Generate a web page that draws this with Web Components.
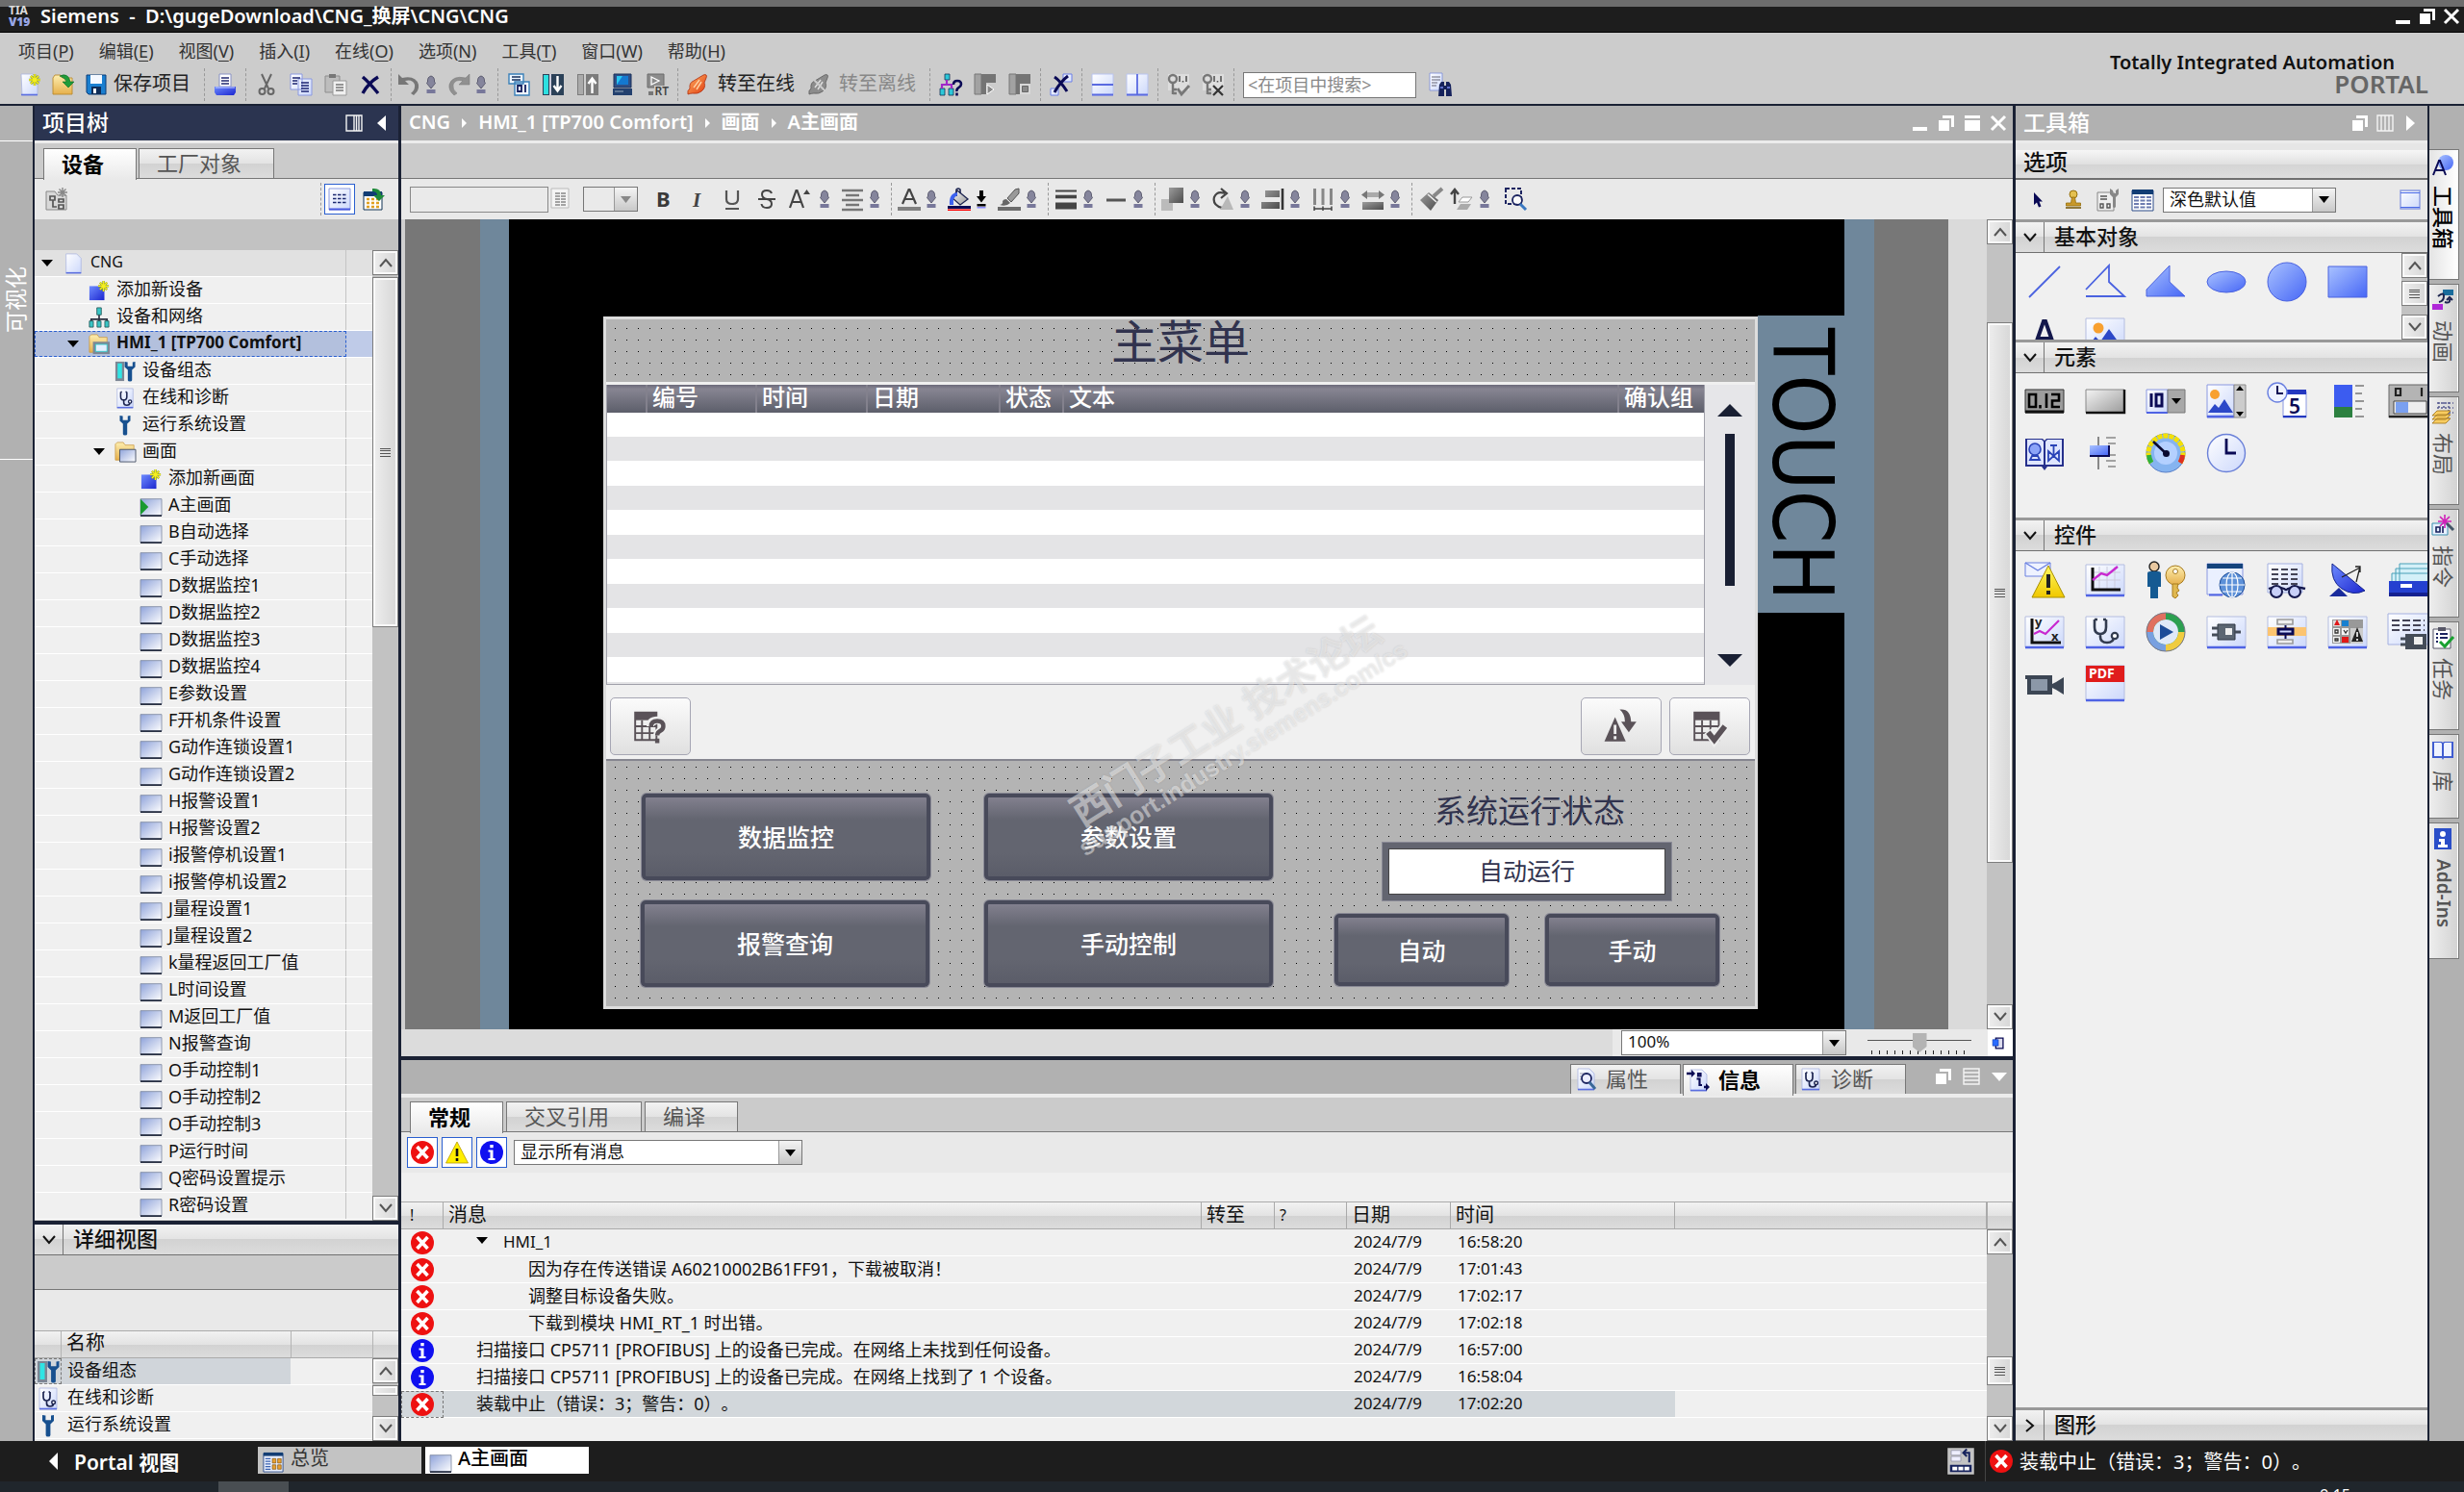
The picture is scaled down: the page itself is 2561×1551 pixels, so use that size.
<!DOCTYPE html>
<html lang="zh-CN">
<head>
<meta charset="utf-8">
<title>Siemens - CNG</title>
<style>
html,body{margin:0;height:100%;background:#1d1d1d}
body{font-family:"Noto Sans","Noto Sans CJK SC",sans-serif;font-size:18px;color:#111;overflow:hidden;text-spacing-trim:space-all}
</style>
</head>
<body>
<tia-portal></tia-portal>
<script>
const BASE = `
*{box-sizing:border-box}
:host{display:block}
button,select,input{font:inherit;color:inherit;border:0;margin:0;padding:0;background:none;border-radius:0;appearance:none}
a{color:inherit;text-decoration:none}
.row{display:flex;align-items:center}
.grow{flex:1;min-width:0}
`;
const define = (name, css, html) => customElements.define(name, class extends HTMLElement {
  connectedCallback() {
    if (this.shadowRoot) return;
    const root = this.attachShadow({mode: 'open'});
    root.innerHTML = `<style>${BASE}${css}</style>` + (typeof html === 'function' ? html(this) : html);
  }
});

/* ---------- icons ---------- */
const lg = (id, a, b, dir = 'x2="1" y2="1"') => `<linearGradient id="${id}" x1="0" y1="0" ${dir}><stop stop-color="${a}"/><stop offset="1" stop-color="${b}"/></linearGradient>`;
const V = 'x2="0" y2="1"';
const DEFS = '<defs>' + lg('blu','#a9c2ff','#4767f6') + lg('pap','#ffffff','#ccd8fb') + lg('scr','#8fa3da','#ffffff') +
  lg('dep','#6d8bff','#1c26cf') + lg('fol','#fdeeb0','#e6b04c',V) + lg('gry','#f4f4f4','#9a9a9a') + lg('drk','#9c9c9c','#4c4c4c') +
  lg('org','#ffb060','#e03a10') + lg('yel','#fff860','#f0c800',V) + '</defs>';
const star = (x, y, c = '#f4ee20') => `<g stroke="#8a9a20" stroke-width="2.6"><path d="M${x} ${y-6}v12M${x-6} ${y}h12M${x-4} ${y-4}l8 8M${x+4} ${y-4}l-8 8"/></g><g stroke="${c}" stroke-width="1.5"><path d="M${x} ${y-6}v12M${x-6} ${y}h12M${x-4} ${y-4}l8 8M${x+4} ${y-4}l-8 8"/></g>`;
const page = '<path d="M4 1h12l5 5v17H4z" fill="url(#pap)" stroke="#a9b4e0" stroke-width=".8"/><path d="M4 22.5h17" stroke="#5b6ee0" stroke-width="1.6"/>';
const wrench = (x, c = '#17508f') => `<path d="M${x-6} 1v6l3.6 3.4V22q0 1.5 2.4 1.5T${x+2.4} 22V10.400L${x+6} 7V1l-3 .6v4.600h-5.600V1.600z" fill="${c}"/>`;
const steth = '<path d="M7 5v5q0 4 3.500 4T14 10V5M7 5h1.500M14 5h-1.500M10.500 14v3q0 3 3.500 3t3.500-3" fill="none" stroke="#1c2450" stroke-width="1.700"/><circle cx="17.600" cy="15.800" r="1.800" fill="#fff" stroke="#1c2450" stroke-width="1.400"/>';
const plug = (a, b, c) => `<path d="M2 22q-1-4 2-6-1-6 4-8l10-6q2-1 3 0t0 3l-2 5q2 5-3 9-4 3-9 2-2 0-5 1z" fill="${a}" stroke="${b}" stroke-width=".8"/><path d="M14 7l-6 8M16 9l-5 8" stroke="${c}" stroke-width="1.500"/>`;
const IC = {
  new: page.replace(/M4/g,'M3') + star(17,7),
  open: '<path d="M1 5l2-3h6l2 3h10v17H1z" fill="url(#fol)" stroke="#b98a30" stroke-width=".9"/><path d="M8 3q9-4 11 6h4l-6 6-6-6h4q-1-4-7-6z" fill="#1f9c3a" stroke="#0c6a20" stroke-width=".6"/>',
  save: '<path d="M2 2h20v20H4l-2-2z" fill="#1a7fd0" stroke="#0b3c78"/><path d="M6 2h12v9H6z" fill="#f4f8ff"/><path d="M7 14h10v8H7z" fill="#0d2c58"/><path d="M9 16h3v5H9z" fill="#fff"/>',
  print: '<path d="M6 1h12v13H6z" fill="#fff" stroke="#8891c4"/><path d="M8 5h8M8 8h8M8 11h8" stroke="#222a70" stroke-width="1.400"/><path d="M1 14h22v6l-2 3H3l-2-3z" fill="url(#dep)"/><path d="M2 15h20" stroke="#c8d2ff"/>',
  cut: '<g fill="none" stroke="#666" stroke-width="2"><path d="M7 1l7 15M17 1l-7 15"/><circle cx="7.500" cy="19" r="3"/><circle cx="16.500" cy="19" r="3"/></g>',
  copy: '<path d="M1 1h12v16H1zM9 6h14v17H9z" fill="url(#pap)" stroke="#8a98e0"/><path d="M3 5h8M3 8h5M3 11h5M12 10h8M12 13h8M12 16h8M12 19h8" stroke="#1c2470" stroke-width="1.400"/>',
  paste: '<path d="M1 3h15v17H1z" fill="#bdbdbd" stroke="#8d8d8d"/><path d="M5 1h7v4H5z" fill="#777"/><path d="M9 8h14v15H9z" fill="#f0f0f0" stroke="#999"/><path d="M12 12h8M12 15h8M12 18h8" stroke="#777" stroke-width="1.400"/>',
  del: '<path d="M4 4q6 5 16 17M20 4Q10 10 4 21" stroke="#0a0a55" stroke-width="3.400" fill="none"/>',
  undo: '<path d="M1 1v11h11l-4-4q8-2 10 4 1 5-4 9l3 2q6-5 5-11Q19 2 5 5z" fill="#777"/>',
  redo: '<path d="M23 1v11H12l4-4q-8-2-10 4-1 5 4 9l-3 2q-6-5-5-11Q5 2 19 5z" fill="#909090" stroke="#777" stroke-width=".5"/>',
  compile: '<path d="M2 1h15v10H2zM8 9h15v14H8z" fill="#eef6ff" stroke="#3a80b8" stroke-width="1.400"/><path d="M5 4h9M5 7h9" stroke="#16305c" stroke-width="1.600"/><path d="M11 13h4v6h-4zM19 12v8" fill="none" stroke="#16205c" stroke-width="1.800"/>',
  dload: '<path d="M1 1h22v22H1z" fill="#2b4158"/><path d="M2 2h5v20H2z" fill="#2de0e0"/><path d="M8 1h2v22H8z" fill="#ccd"/><path d="M16.500 3v15M12.500 13l4 5.500 4-5.500" stroke="#fff" stroke-width="2.400" fill="none"/>',
  uload: '<path d="M1 1h22v22H1z" fill="#7c7c7c"/><path d="M2 2h5v20H2z" fill="#aaa"/><path d="M8 1h2v22H8z" fill="#ccc"/><path d="M16.500 21V6M12.500 11l4-5.500 4 5.500" stroke="#fff" stroke-width="2.400" fill="none"/>',
  pc: '<path d="M3 1h18v14H3z" fill="#2f4f86" stroke="#1d3158"/><path d="M6 3h12v9H6z" fill="#29c6f0"/><path d="M6 12l6-9h6v9z" fill="#1478d0"/><path d="M2 16h20v7H2z" fill="#23406e"/><path d="M4 19h9" stroke="#9ab"/>',
  rt: '<path d="M2 1h17v14H2z" fill="#8c8c8c" stroke="#6a6a6a"/><path d="M6 4l8 4-8 4z" fill="none" stroke="#fff" stroke-width="1.300"/><path d="M3 19h5v4H3z" fill="#777"/><path d="M9 13h15v11H9z" fill="#ccc"/><text x="9.500" y="23" font-size="12" font-weight="600" fill="#444">RT</text>',
  online: plug('url(#org)','#b03010','#ffd0a0'),
  offline: plug('#8c8c8c','#5c5c5c','#ddd') + '<path d="M4 4l16 16" stroke="#ccc" stroke-width="2"/>',
  nethelp: '<path d="M6 1h5v6H6zM1 16h5v7H1zM10 16h5v7h-5z" fill="#2cc8d8" stroke="#135" stroke-width=".8"/><path d="M8 7v5M3 16v-4h10v4" fill="none" stroke="#a028c8" stroke-width="2.200"/><path d="M15 12q0-4 4-4t4 3.500q0 2-2.500 3.500T18.500 19M18.500 20.500v3" fill="none" stroke="#0a0a55" stroke-width="2.600"/>',
  dev1: '<path d="M1 1h7v21H1z" fill="#a2a2a2" stroke="#777"/><path d="M8 1h15v21H8z" fill="#747474"/><path d="M13 10h10v13H13z" fill="#ccc"/><path d="M14 12l7 5-7 5z" fill="#888" stroke="#fff"/>',
  dev2: '<path d="M1 1h7v21H1z" fill="#a2a2a2" stroke="#777"/><path d="M8 1h15v21H8z" fill="#747474"/><path d="M12 11h11v11H12z" fill="#d8d8d8"/><path d="M14.500 13.500h6v6h-6z" fill="#888" stroke="#666"/>',
  xref: '<path d="M14 1h9v8h-9zM1 16h8v7H1z" fill="url(#pap)" stroke="#6a7ee8"/><path d="M5 4q6 4 13 15M19 3Q11 9 5 20" stroke="#0a0a55" stroke-width="3" fill="none"/>',
  splith: '<path d="M1 1h22v22H1z" fill="url(#pap)" stroke="#b9c4f0"/><path d="M1 12h22M1 22.500h22" stroke="#5a6ae0" stroke-width="1.800"/>',
  splitv: '<path d="M1 1h22v22H1z" fill="url(#pap)" stroke="#b9c4f0"/><path d="M12 1v22M1 22.500h22" stroke="#5a6ae0" stroke-width="1.800"/>',
  lock1: '<path d="M1 1h22v17H1z" fill="#ddd"/><circle cx="6" cy="6" r="4" fill="none" stroke="#777" stroke-width="2.400"/><path d="M6 10v12M6 17h4M6 21h4" stroke="#777" stroke-width="2.400"/><path d="M13 3v6M16.500 8v1.500M20 3v6" stroke="#555" stroke-width="1.600"/><path d="M11 16l4 6 8-9" stroke="#777" stroke-width="2.800" fill="none"/>',
  lock2: '<path d="M1 1h22v17H1z" fill="#ddd"/><circle cx="6" cy="6" r="4" fill="none" stroke="#777" stroke-width="2.400"/><path d="M6 10v12M6 17h4M6 21h4" stroke="#777" stroke-width="2.400"/><path d="M13 3v6M16.500 8v1.500M20 3v6" stroke="#555" stroke-width="1.600"/><path d="M12 13l10 10M22 13L12 23" stroke="#333" stroke-width="2.200"/>',
  find: '<path d="M1 0h13v18H1z" fill="url(#pap)" stroke="#7a8cd8" stroke-width=".8"/><path d="M3 4h9M3 7h9M3 10h6M3 13h5" stroke="#667" stroke-width="1.200"/><path d="M10 24l1-12 2-3h3v4h2V9h3l2 3 1 12h-6v-7h-2v7z" fill="#16225c"/><path d="M12 15h3M19 15h3" stroke="#7a8cf0" stroke-width="1.400"/>',
  dd: '<path d="M12 3q4 1 3.500 6l1 1.500-4.500 5.500-4.500-5.500 1-1.500Q8 4 12 3z" fill="#85859c" stroke="#4a4a60" stroke-width=".8"/><path d="M7.500 17h9v4h-9z" fill="#77779a"/>',
  ddk: '<path d="M10 3h4v6h3L12 15.500 7 9h3z" fill="#000"/><path d="M7.500 17h9v2.500h-9z" fill="#000"/><path d="M7.500 20h9v1.500h-9z" fill="#88f"/>',
  fB: '<text x="5" y="20" font-size="22" font-weight="700" fill="#3a3a3a">B</text>',
  fI: '<text x="7" y="20" font-size="21" font-style="italic" font-family="Liberation Serif" font-weight="700" fill="#444">I</text>',
  fU: '<path d="M6 3v9q0 5 6 5t6-5V3M5 22h14" fill="none" stroke="#555" stroke-width="2.200"/>',
  fS: '<path d="M17 6q-1-3-5-3-5 0-5 4t5 5q5 1 5 5t-5 4q-5 0-5.500-4M3 12h18" fill="none" stroke="#444" stroke-width="2"/>',
  fA: '<path d="M1 21L7.500 3h1L15 21M3.500 15h9" fill="none" stroke="#444" stroke-width="2.200"/><path d="M15 7l3.500-5L22 7z" fill="#444"/>',
  al: '<path d="M1 3h22M5 8h14M1 13h22M5 18h14M1 23h22" stroke="#777" stroke-width="2.600"/>',
  fc: '<path d="M5 17L11.500 2h1L19 17M8 12h8" fill="none" stroke="#444" stroke-width="2.200"/><path d="M0 20h24v4H0z" fill="#808080"/>',
  fill: '<path d="M10 3l11 9-8 6-8-7z" fill="url(#gry)" stroke="#1c2450" stroke-width="1.300"/><path d="M9 9V2q2-2 4 0v4" fill="none" stroke="#1c2450" stroke-width="1.600"/><path d="M10 5Q1 6 2 18h4q-1-8 4-10z" fill="#3c62f0"/><path d="M0 19h24v3H0z" fill="#0a0a55"/><path d="M0 22.500h24V24H0z" fill="#f00"/>',
  pen: '<path d="M22 1l-4 1-8 9 4 4 8-9z" fill="#999" stroke="#555"/><path d="M9 12l4 4q-4 4-11 2 4-1 3-4 1-2 4-2z" fill="#666"/><path d="M0 20h24v4H0z" fill="#6c6c6c"/>',
  lw: '<path d="M1 3.500h22" stroke="#444" stroke-width="2"/><path d="M1 9.500h22" stroke="#444" stroke-width="3.600"/><path d="M1 19h22" stroke="#444" stroke-width="7"/>',
  ls: '<path d="M2 13h20" stroke="#555" stroke-width="3"/>',
  lay: '<path d="M0 12h12v12H0z" fill="#bbb"/><path d="M8 0h15v16H8z" fill="url(#drk)"/>',
  rot: '<path d="M11 21Q1 18 3 10q3-7 11-4M10 1l6 5-6 5" fill="none" stroke="#444" stroke-width="2.200"/><path d="M17 9l6 14H9z" fill="#b8b8b8"/>',
  alr: '<path d="M4 3h15v7H4zM0 15h19v7H0z" fill="url(#drk)"/><path d="M22 1v22" stroke="#333" stroke-width="2.600"/>',
  dist: '<path d="M2 1h3v17H2zM10.500 1h3v17h-3zM19 1h3v17h-3z" fill="#888"/><path d="M3 22h18M3 19.500v4.500M12 19.500v4.500M21 19.500v4.500" stroke="#444" stroke-width="1.500"/>',
  wid: '<path d="M5 5h14v5H5z" fill="#aaa"/><path d="M6 3v9L0 7.500zM18 3v9l6-4.500z" fill="#777"/><path d="M1 15h22v8H1z" fill="url(#drk)"/>',
  broom: '<path d="M23 1l-9 8" stroke="#888" stroke-width="4"/><path d="M9 5l10 8-8 11L0 13z" fill="url(#drk)"/><path d="M8 7l9 8" stroke="#eee" stroke-width="1.600"/>',
  tab: '<path d="M4 17V3M0 7l4-5 4 5" fill="none" stroke="#444" stroke-width="2.400"/><path d="M12 10h10l-4 5H8z" fill="#fff" stroke="#999"/><path d="M10 17h11l-4 6H6z" fill="#aaa"/>',
  zoomsel: '<path d="M2 1h16v16H2z" fill="none" stroke="#1c2460" stroke-width="2" stroke-dasharray="4 2"/><circle cx="14" cy="13" r="5" fill="#fff" fill-opacity=".8" stroke="#1c2460" stroke-width="1.800"/><path d="M17 17l6 6" stroke="#3a78c0" stroke-width="3"/>',
  list: '<path d="M2 1h18v20H2z" fill="#f4f4f4" stroke="#bbb"/><path d="M6 6h11M6 9h11M6 12h11M6 15h11M6 18h11" stroke="#888" stroke-width="1.500" stroke-dasharray="5 1"/>',
  newtree: '<path d="M1 4h9l3 4h9v15H1z" fill="#d8d8d8" stroke="#888"/><path d="M5 9h5v4H5zM8 13v7h4M14 18h5v4h-5zM14 12h5v3h-5z" fill="none" stroke="#555" stroke-width="1.700"/><path d="M18 0v10M13 5h10M14.500 1.500l7 7M21.500 1.500l-7 7" stroke="#888" stroke-width="1.400"/>',
  table: '<path d="M1 1h22v22H1z" fill="url(#pap)" stroke="#8a9ae0"/><path d="M1 22.500h22" stroke="#4a5ae0" stroke-width="2"/><path d="M5 7.500h14M5 11.500h14M5 15.500h14" stroke="#1c2a70" stroke-width="1.600" stroke-dasharray="3.500 1.500"/>',
  ovw: '<path d="M1 5h19v18H1z" fill="#fff" stroke="#135"/><path d="M1 4h19v5H1z" fill="#123d74"/><path d="M4 12h13M4 16h13M4 20h13" stroke="#e0a020" stroke-width="2.400" stroke-dasharray="3 2"/><path d="M10 1q9-1 9 7h4l-6 6-6-6h4q0-4-5-4z" fill="#1f8a3a"/>',
  over: '<path d="M1 2h22v21H1z" fill="#e8eefc" stroke="#2a4a88"/><path d="M1 1h22v4H1z" fill="#123d74"/><path d="M3 8h6M3 11h6M3 14h6M3 17h6M3 20h6" stroke="#3a62b0" stroke-width="1.400"/><path d="M11 8h4v5h-4zM17 8h4v5h-4zM11 15h4v5h-4zM17 15h4v5h-4z" fill="#e8a030" stroke="#7a5010" stroke-width=".7"/>',
  doc: page,
  add: '<path d="M1 7h17v16H1z" fill="url(#dep)"/>' + star(17,7),
  net: '<path d="M12 8v6M3 18v-4h18v4M12 14v4" fill="none" stroke="#2a3040" stroke-width="1.800"/><path d="M9.500 1h5v8h-5zM1 16h4.500v7H1zM9.700 16h4.500v7H9.700zM18.500 16H23v7h-4.500z" fill="#39c6c6" stroke="#255" stroke-width=".9"/>',
  hmi: '<path d="M1 3l2-2h7l2 3h9v17H1z" fill="url(#fol)" stroke="#c8963c" stroke-width=".8"/><path d="M5 9h19v14H5z" fill="#7d8896"/><path d="M8 12h13v8H8z" fill="#e4eeff" stroke="#3cc"/>',
  cfg: '<path d="M1 1h10v22H1z" fill="#7c8694"/><path d="M3.500 3h5v17h-5z" fill="#30e4e4"/>' + wrench(17.500),
  diag: '<path d="M3 1h18v22H3z" fill="url(#pap)" stroke="#a9b4e0" stroke-width=".8"/><path d="M3 22.500h18" stroke="#5b6ee0" stroke-width="1.600"/>' + steth,
  wr: wrench(12),
  scrs: '<path d="M1 3l2-2h7l2 3h10v17H1z" fill="url(#fol)" stroke="#c8963c" stroke-width=".8"/><path d="M6 9h18v14H6z" fill="url(#scr)" stroke="#445066"/>',
  scr: '<path d="M0 4h24v19H0z" fill="url(#scr)" stroke="#8892a8"/><path d="M0 23h24" stroke="#1c2438" stroke-width="1.800"/>',
  scra: '<path d="M0 4h24v19H0z" fill="url(#scr)" stroke="#8892a8"/><path d="M0 23h24" stroke="#1c2438" stroke-width="1.800"/><path d="M0 4l9 9-9 9z" fill="#1a9a30"/>',
  err: '<circle cx="12" cy="12" r="12" fill="#ee1111"/><path d="M6.500 6l11 12M17.500 6l-11 12" stroke="#fff" stroke-width="3.600"/>',
  info: '<circle cx="12" cy="12" r="12" fill="#1010f0"/><path d="M10.300 4h3.400v3.200h-3.400zM8.500 9.500h5V18h2v2h-7v-2h2v-6.500h-2z" fill="#fff"/>',
  warn: '<path d="M12 1l11.500 22H.5z" fill="#ffee00" stroke="#b89a00" stroke-width=".8"/><path d="M12 8v8M12 18v3" stroke="#111" stroke-width="2.600"/>',
  prop: page + '<path d="M6 6h8M6 9h4M6 12h4" stroke="#99a" stroke-width="1.200"/><circle cx="13" cy="11" r="5" fill="#eef" fill-opacity=".8" stroke="#1c2460" stroke-width="1.800"/><path d="M16 15l6 7" stroke="#3a6898" stroke-width="3"/>',
  msg: page + '<path d="M0 5h5M18 19h3" stroke="#0a0a55" stroke-width="2.400"/><path d="M5 1l4 4-4 4zM20 15l4 4-4 4z" fill="#0a0a55"/><path d="M12 5h2.500v2.500H12zM10.500 10.500h3V17h2.500" fill="none" stroke="#0a0a55" stroke-width="2.200"/>',
  arrow: '<path d="M7 4v13l3-2.500 2 5 2.500-1-2-5H16z" fill="#0a0a55"/>',
  stamp: '<circle cx="12" cy="6" r="4" fill="#e4c050" stroke="#96700c"/><path d="M10.500 9h3l1 6h5v3h-15v-3h5z" fill="#c8982a" stroke="#96700c" stroke-width=".8"/><path d="M4 20h16" stroke="#785c10" stroke-width="1.600"/>',
  opts: '<path d="M1 4h17v19H1z" fill="#eee" stroke="#888"/><path d="M4 8h7M4 11h7M4 16h3v4H4zM11 16h3v4h-3z" fill="none" stroke="#555" stroke-width="1.400"/><path d="M14 0v6l3 3v10q1.500 2 3 0V9l3-3V0l-3 2v3h-3V2z" fill="#888"/>',
  grid: '<path d="M1 2h22v21H1z" fill="#fff" stroke="#2a4a88"/><path d="M1 1h22v5H1z" fill="#123d74"/><path d="M3 9h18M3 12.500h18M3 16h18M3 19.500h18" stroke="#6d7cb0" stroke-width="1.800" stroke-dasharray="5 1.500"/>',
  win: '<path d="M2 2h20v19H2z" fill="url(#pap)" stroke="#8a9ae0" stroke-width="1.400"/><path d="M2 4.500h20M2 19.500h20" stroke="#4a6ae8" stroke-width="1.200"/>',
  fit: '<path d="M8 2h14v20H8z" fill="#dde" stroke="#0a0a55" stroke-width="2.400"/><path d="M2 5h11v12H2z" fill="#2a6cff" stroke="#0a30a0"/>',
  navi: '<path d="M1 1h22v22H1z" fill="#c4c4c4"/><path d="M4 3h8v4H4zM4 8h8v4H4z" fill="#eef" stroke="#99a" stroke-width=".7"/><path d="M3 15h18v6H3z" fill="#16225c"/><path d="M5 18h14" stroke="#fff" stroke-width="3" stroke-dasharray="4 1"/><path d="M19 13V5h-4M17 2l-3 3 3 3" fill="none" stroke="#16225c" stroke-width="1.600"/>',
  ta: '<circle cx="15" cy="9" r="8" fill="url(#blu)"/><path d="M2 22L8 7h1l6 15M4.500 17h8" fill="none" stroke="#0a0a55" stroke-width="2"/>',
  anim: '<path d="M12 1h11v6H12z" fill="#1a6c9c"/><path d="M1 16h11v6H1z" fill="#b028d8"/><path d="M7 8q6-5 6 0t-5 6M14 14q6 2 5-3M16 12l3-3 3 3" fill="none" stroke="#1c2450" stroke-width="2"/>',
  layo: '<path d="M6 2h17M6 7h17M14 12h9M8 1v8M13 1v8M18 1v18" stroke="#555a90" stroke-width="1.500" stroke-dasharray="2 2"/><path d="M6 10h14l-5 5H1zM6 14h14l-5 5H1zM6 18h14l-5 5H1z" fill="#f8cc60" stroke="#a87c20" stroke-width=".9"/>',
  instr: '<path d="M1 10h16v12H1z" fill="#e8f0ff" stroke="#3a90b0"/><path d="M5 14h4v5H5zM12 13v7" fill="none" stroke="#16205c" stroke-width="1.600"/><path d="M14 1v14M7 8h14M9 3l10 10M19 3L9 13" stroke="#d020b8" stroke-width="1.600"/><path d="M16 10l7 7" stroke="#456" stroke-width="3"/>',
  task: '<path d="M2 3h18v20H2z" fill="#fff" stroke="#556"/><path d="M7 1h8v4H7z" fill="#556"/><path d="M5 8h2M9 8h8M5 12h2M9 12h8M5 16h2" stroke="#1c2460" stroke-width="1.800"/><path d="M9 16l5 5 9-10" stroke="#18a030" stroke-width="3" fill="none"/>',
  lib: '<path d="M1 3h10l1 1 1-1h10v17H13l-1 2-1-2H1z" fill="#3f5cd0"/><path d="M3 4h7l1 1v13H3zM14 4h7v14h-8V5z" fill="#eef2ff"/>',
  addin: '<path d="M3 1h18v22H3z" fill="#2a4ec8"/><circle cx="12" cy="7" r="3" fill="#fff"/><path d="M8 12h6v6h3v3H7v-3h3v-3H8z" fill="#fff"/>',
  hflt: '<path d="M2 3h14v5H2z" fill="#5a5258"/><path d="M2 3h14v18H2zM2 12h14M2 16.500h14M6.500 8v13M11.500 8v13" fill="none" stroke="#5a5258" stroke-width="1.200"/><path d="M12 12q0-4 4.500-4t4.500 3.500q0 2.500-2.500 3.500-2 1-2 3" fill="none" stroke="#eee" stroke-width="5"/><path d="M12.500 12q0-3.500 4-3.500T20.500 12q0 2-2 3-2 1-2 3M16.500 20v3" fill="none" stroke="#5a5258" stroke-width="2.800"/>',
  hack: '<path d="M2 3h16v5H2z" fill="#5a5258"/><path d="M2 3h16v18H2zM2 12h16M2 16.500h16M7 8v13M12.500 8v13" fill="none" stroke="#5a5258" stroke-width="1.200"/><path d="M11 15l4 6 7-9" stroke="#eee" stroke-width="6" fill="none"/><path d="M11 16l4 5 7-9" stroke="#5a5258" stroke-width="3.600" fill="none"/>',
  hloop: '<path d="M8 6l7 16H1z" fill="#5a5258"/><path d="M8 11v6M8 18.500v2" stroke="#eee" stroke-width="1.800"/><path d="M11 1q7-1 7.500 8H22l-5 7-5-7h2.500q0-5-3.500-8z" fill="#5a5258"/>'
};
/* toolbox glyphs, 42 x 40 box */
const card = '<path d="M1 4h40v32H1z" fill="url(#pap)" stroke="#b4bde0"/><path d="M1 36h40" stroke="#4f63e4" stroke-width="2.600"/>';
const BIG = {
  line: '<path d="M5 36L37 4" stroke="#4a62e0" stroke-width="1.800"/>',
  poly: '<path d="M1 28L25 3v17l16 15H1" fill="none" stroke="#4a62e0" stroke-width="1.800"/>',
  pgon: '<path d="M1 28L25 3v17l16 15H1z" fill="url(#blu)" stroke="#4a62e0"/>',
  ell: '<ellipse cx="21" cy="20" rx="20" ry="11" fill="url(#blu)" stroke="#4a62e0"/>',
  circ: '<circle cx="21" cy="20" r="20" fill="url(#blu)" stroke="#4a62e0"/>',
  rect: '<path d="M1 4h40v32H1z" fill="url(#blu)" stroke="#4a62e0"/>',
  txt: '<path d="M11 33L20 7h2l9 26M14 25h14" fill="none" stroke="#14184c" stroke-width="4"/>',
  img: card + '<circle cx="14" cy="14" r="5.500" fill="#f8a030"/><path d="M3 33l8-10 5 5 9-13 13 18z" fill="#2c48c8"/>',
  io: '<path d="M1 8h40v24H1z" fill="#9c9c9c" stroke="#333"/><path d="M1 31h40" stroke="#111" stroke-width="3"/><path d="M5 13h7v13H5zM16.500 24v3.500M23 12v15M28 13h8v6.500h-7V26h8" fill="none" stroke="#000" stroke-width="2.600"/>',
  btn: '<path d="M1 8h40v24H1z" fill="url(#gry)" stroke="#888"/><path d="M1 32h40V8" fill="none" stroke="#111" stroke-width="2.400"/>',
  sym: '<path d="M1 8h22v24H1z" fill="url(#pap)" stroke="#8a98e0"/><path d="M1 32h22" stroke="#4f63e4" stroke-width="2"/><path d="M23 8h18v24H23z" fill="#a8a8a8" stroke="#777"/><path d="M27 17h10l-5 6z"/><path d="M6 12v14M11 13h6v12h-6z" fill="none" stroke="#0a0a55" stroke-width="3"/>',
  gio: '<path d="M1 3h28v34H1z" fill="url(#pap)" stroke="#8a98e0"/><path d="M1 36h28" stroke="#4f63e4" stroke-width="2.400"/><path d="M29 3h12v34H29z" fill="#ccc" stroke="#888"/><path d="M31 9l4-5 4 5zM31 31l4 5 4-5z"/><circle cx="9" cy="13" r="5" fill="#f8a030"/><path d="M2 32l7-9 4 4 6-9 9 14z" fill="#2c48c8"/>',
  date: '<path d="M17 10h24v27H17z" fill="#fff" stroke="#8a98e0"/><path d="M17 8h24v5H17z" fill="#2438c0"/><path d="M17 36h24" stroke="#2438c0" stroke-width="2"/><text x="23" y="33" font-size="21" font-weight="600" fill="#0a0a55">5</text><circle cx="11" cy="11" r="10" fill="#eef2ff" stroke="#6a80e0" stroke-width="1.400"/><path d="M11 4v8h6" fill="none" stroke="#0a0a55" stroke-width="2"/>',
  bar: '<path d="M7 3h19v24H7z" fill="#3c5cf0"/><path d="M7 26h19v11H7z" fill="#2c8040"/><path d="M29 4h9M29 12h7M29 20h9M29 28h7M29 36h9" stroke="#777" stroke-width="1.600"/>',
  sw: '<path d="M1 3h44v34H1z" fill="#b4b4b4" stroke="#666"/><path d="M1 36h44" stroke="#222" stroke-width="2"/><path d="M8 7h5v7H8zM35 6v9" fill="none" stroke="#222" stroke-width="2.200"/><path d="M6 20h34v13H6z" fill="#eee" stroke="#444"/><path d="M8 21h13v11H8z" fill="#7aa0f0"/>',
  book: '<path d="M1 5h18l2 2 2-2h18v29H24l-3 4-3-4H1z" fill="#26308c"/><path d="M3 6h15l2 2v24H3zM24 6h15v26H22V8z" fill="#dfe6ff"/><circle cx="11" cy="16" r="6" fill="#8ba4f8" stroke="#2a44b8" stroke-width="1.600"/><path d="M6 27h10l-2-4H8zM25 18v10l11-10v10zM30.500 22V12M27 12h7" fill="none" stroke="#2a44b8" stroke-width="1.800"/>',
  slide: '<path d="M14 3v34" stroke="#888" stroke-width="2"/><path d="M22 4h10M24 10h8M22 28h10M24 34h8M26 22h6" stroke="#888" stroke-width="1.600"/><path d="M5 12h20v10H5z" fill="url(#blu)"/><path d="M5 23h20v-11" fill="none" stroke="#0a0a55" stroke-width="2"/>',
  gauge: '<circle cx="21" cy="20" r="20" fill="#86b4f0" stroke="#5a80c8"/><path d="M6 30A18 18 0 1 1 36 30" fill="none" stroke="#f4e000" stroke-width="5" stroke-dasharray="5 1"/><path d="M6 30A18 18 0 0 1 3.500 22" fill="none" stroke="#2cb040" stroke-width="5"/><path d="M36 30A18 18 0 0 0 38.500 22" fill="none" stroke="#e03020" stroke-width="5"/><circle cx="21" cy="20" r="12" fill="#b4d0ff"/><path d="M8 8l14 13" stroke="#0a0a30" stroke-width="2.600"/><circle cx="21.500" cy="20.500" r="3.500" fill="#0a0a30"/>',
  clock: '<circle cx="21" cy="20" r="19.500" fill="url(#pap)" stroke="#6a80d8" stroke-width="1.400"/><path d="M21 5v15h10" fill="none" stroke="#0a0a55" stroke-width="2.800"/>',
  alarm: '<path d="M1 2h26v14H1z" fill="#eef2ff" stroke="#6a80e0"/><path d="M1 2l13 8 13-8" fill="none" stroke="#6a80e0" stroke-width="1.400"/><path d="M25 5l17 33H8z" fill="url(#yel)" stroke="#a89000"/><path d="M25 14v14M25 31v4" stroke="#222" stroke-width="4"/>',
  trend: card + '<path d="M15 6v24M23 6v24M31 6v24M8 12h29M8 20h29" stroke="#ccd" stroke-width="1"/><path d="M8 7v23h29" fill="none" stroke="#111" stroke-width="3"/><path d="M8 20l9-7 6 2 11-9" fill="none" stroke="#c828d0" stroke-width="2.400"/>',
  user: '<circle cx="9" cy="6" r="5" fill="#e8c8a0" stroke="#222" stroke-width="1.400"/><path d="M2 13q0-2 3-2h8q3 0 3 2v14h-3v12H5V27H2z" fill="#155a92"/><circle cx="31" cy="15" r="10" fill="url(#fol)" stroke="#a87c20"/><circle cx="31" cy="11" r="2.500" fill="#fff" stroke="#a87c20"/><path d="M28 24v13l3 2 3-3-2-3 3-2-2-3 1-4z" fill="#e0b850" stroke="#a87c20"/>',
  web: '<path d="M1 3h37v32H1z" fill="#eaf0ff" stroke="#8a98e0"/><path d="M1 3h37v5H1z" fill="#15447c"/><path d="M3 35.500h14" stroke="#4f63e4" stroke-width="2"/><circle cx="27" cy="25" r="13" fill="#5c90d8" stroke="#1c4c98"/><ellipse cx="27" cy="25" rx="6" ry="13" fill="none" stroke="#fff" stroke-width="1.200"/><path d="M14 25h26M27 12v26M17 18h20M17 32h20" stroke="#fff" stroke-width="1.200"/>',
  recv: '<path d="M1 3h36v30H1z" fill="url(#pap)" stroke="#a4b0e0"/><path d="M5 9h28M5 14h28M5 19h28M5 24h28" stroke="#445" stroke-width="2" stroke-dasharray="7 3"/><path d="M2 29q8-3 16 0 2 2 4 0 8-3 18 0" fill="none" stroke="#14184c" stroke-width="2.400"/><circle cx="10" cy="32" r="6" fill="#c8d0f8" stroke="#14184c" stroke-width="2"/><circle cx="29" cy="32" r="6" fill="#c8d0f8" stroke="#14184c" stroke-width="2"/>',
  dish: '<path d="M5 3q-2 18 10 26t24 2z" fill="url(#dep)" stroke="#14248c"/><path d="M15 17L34 7M34 12V6h-5M34 6l-4 16" fill="none" stroke="#222" stroke-width="1.300"/><path d="M2 37l10-9 9 9z" fill="#1a2c9c"/>',
  recipe: '<path d="M12 3h34v20H12zM8 8h34v20H8zM4 13h38v20H4z" fill="#d4f0f8" stroke="#48a0b8"/><path d="M1 21h44v16H1z" fill="#2440d0"/><path d="M1 35h44" stroke="#142090" stroke-width="4"/><path d="M13 24h12v4H13z" fill="#fff"/>',
  fx: card + '<path d="M8 6v25h30" fill="none" stroke="#111" stroke-width="3"/><path d="M10 22l6-3 6 3 14-14" fill="none" stroke="#c828d0" stroke-width="2.200"/><text x="11" y="14" font-size="13" font-weight="700" fill="#222">y</text><text x="28" y="29" font-size="13" font-weight="700" fill="#222">x</text>',
  sdiag: card + '<path d="M10 7v8q0 7 6 7t6-7V7M10 7h3M22 7h-3M16 22v3q0 6 7 6t7-6" fill="none" stroke="#333c50" stroke-width="2.600"/><circle cx="31" cy="24" r="3.200" fill="#fff" stroke="#333c50" stroke-width="2.200"/>',
  media: '<circle cx="21" cy="20" r="16.500" fill="#dfe9f8" stroke="#2ca050" stroke-width="7"/><path d="M4.500 20A16.500 16.500 0 0 1 21 3.500" fill="none" stroke="#e07060" stroke-width="7"/><path d="M21 36.500A16.500 16.500 0 0 0 37.500 20" fill="none" stroke="#f0cc40" stroke-width="7"/><path d="M4.500 20A16.500 16.500 0 0 0 21 36.500" fill="none" stroke="#78a0e0" stroke-width="7"/><circle cx="21" cy="20" r="20" fill="none" stroke="#778" stroke-width="1"/><path d="M15 12l14 8-14 8z" fill="#1c4c98"/>',
  plc: card + '<path d="M12 12h18v16H12z" fill="#5c6672" stroke="#2c3440"/><path d="M6 16h6M6 23h6M30 20h6" stroke="#444c58" stroke-width="3"/><path d="M20 16h7v7h-7z" fill="#eee"/>',
  step: card + '<path d="M1 15h40v9H1z" fill="#fcc470"/><path d="M11 7h16v5H11zM11 28h16v4H11z" fill="#eee" stroke="#999" stroke-width="1.600"/><path d="M12 17h15v5H12z" fill="#cfd8ff" stroke="#0a0a55" stroke-width="3"/><path d="M19.500 13v3M19.500 23v4" stroke="#0a0a55" stroke-width="2"/>',
  smart: card + '<path d="M5 7h32v25H5z" fill="#999"/><path d="M6 8h8v6H6z" fill="#ddd"/><path d="M7 13l3-6 3 6z" fill="#e01818"/><path d="M15 8h7v6h-7z" fill="#1880d0"/><path d="M6 16h7v7H6zM15 16h7v7h-7zM6 25h7v6H6z" fill="#f4f4f4"/><path d="M15 25h7v6h-7z" fill="#e01818"/><path d="M8 18h3v3H8zM17 18l2 3 2-3M8 27h3v2H8z" fill="none" stroke="#333" stroke-width="1.300"/><path d="M24 16h13v16H24z" fill="#ccc"/><path d="M31 15l6 15H25z" fill="#222"/><path d="M31 20v5M31 27v2" stroke="#fff" stroke-width="1.600"/>',
  plclist: '<path d="M0 1h42v32H0z" fill="url(#pap)" stroke="#a4b0e0"/><path d="M4 8h34M4 13h34M4 18h34" stroke="#445" stroke-width="2" stroke-dasharray="8 3"/><path d="M18 22h22v16H18z" fill="#444c58"/><path d="M13 27h5M13 33h5" stroke="#444c58" stroke-width="3"/><path d="M27 25h9v8h-9z" fill="#eee"/>',
  cam: '<path d="M1 11h28v20H3V15H1z" fill="#3c4654"/><path d="M7 15h17v12H7z" fill="#8c98a8"/><path d="M29 20l4-2 8-5v18l-8-5-4-2z" fill="#3c4654"/>',
  pdf: '<path d="M1 1h40v36H1z" fill="url(#pap)" stroke="#b4bde0"/><path d="M1 1h40v17H1z" fill="#e01c1c"/><path d="M1 37h40" stroke="#4f63e4" stroke-width="2.600"/><text x="4" y="14" font-size="14" font-weight="700" fill="#fff">PDF</text>'
};
define('ui-icon', ':host{display:inline-flex;width:24px;height:24px;flex:none}svg{width:100%;height:100%;overflow:visible}', h => {
  const n = h.getAttribute('name');
  return BIG[n] ? `<svg viewBox="0 0 42 40" aria-hidden="true">${DEFS}${BIG[n]}</svg>` : `<svg viewBox="0 0 24 24" aria-hidden="true">${DEFS}${IC[n] || ''}</svg>`;
});
/* toolbar button: the "w" attribute is its slot width */
define('tool-btn', ':host{display:inline-flex;flex:none}button{height:32px;display:flex;align-items:center;justify-content:center;white-space:nowrap}:host([boxed]) button{border:1px solid #2a5fd0;background:#fff}:host([name^=dd]) ui-icon{margin-left:-6px}',
  h => `<button type="button" aria-label="${h.getAttribute('name')}" style="width:${h.getAttribute('w') || 36}px"><ui-icon name="${h.getAttribute('name')}"></ui-icon></button>`);
define('tool-sep', ':host{flex:none;width:7px;height:34px;padding-left:3px}i{display:block;height:100%;border-left:1px dashed #999}', '<i></i>');
const buttons = s => s.split(' ').map(x => { const [n, w] = x.split(':'); return n === '|' ? '<tool-sep></tool-sep>' : `<tool-btn name="${n}" w="${w || 36}"></tool-btn>`; }).join('');

const HEADGRAD = 'background:linear-gradient(#f2f2f2,#e3e3e3 50%,#d2d2d2 50%,#dcdcdc)';
/* collapsible section header */
define('section-bar', `:host{flex:none;border-bottom:1px solid #707070}button{width:100%;height:31px;display:flex;align-items:stretch;text-align:left;${HEADGRAD}}
 .c{width:30px;display:flex;align-items:center;justify-content:center;border-right:1px solid #777}.t{padding-left:10px;font-size:22px;font-weight:500;line-height:29px}
 :host([closed]) svg{transform:rotate(-90deg)}`,
 '<button type="button"><span class="c"><svg width="14" height="10" viewBox="0 0 14 10"><path d="M1 1l6 7 6-7" fill="none" stroke="#111" stroke-width="2"/></svg></span><span class="t"><slot></slot></span></button>');

/* vertical scroll bar: before / thumb are heights in px */
define('scroll-bar', `:host{flex:none;width:27px;background:#c2c2c2;display:flex;flex-direction:column}
 button,.th{flex:none;height:26px;border:1px solid #7d7d7d;box-shadow:inset 0 0 0 2px #fafafa;background:linear-gradient(90deg,#eee,#d6d6d6);display:flex;align-items:center;justify-content:center}
 .sp{flex:1}.g{width:11px;height:9px;border-top:1px solid #555;border-bottom:1px solid #555;display:flex;flex-direction:column;justify-content:space-evenly}.g i{border-top:1px solid #555}`,
 h => { const c = d => `<button type="button" aria-label="scroll"><svg width="14" height="10" viewBox="0 0 14 10"><path d="${d}" fill="none" stroke="#555" stroke-width="2"/></svg></button>`;
  const t = +h.getAttribute('thumb'), b = +h.getAttribute('before');
  return c('M1 9l6-7 6 7') + `<div style="height:${b}px;flex:none"></div><div class="th" style="height:${t}px">${t > 20 ? '<div class="g"><i></i><i></i></div>' : ''}</div><div class="sp"></div>` + c('M1 1l6 7 6-7'); });

define('combo-box', `:host{display:flex;height:26px;border:1px solid #777;background:#fff}select{flex:1;min-width:0;padding:0 0 2px 6px;line-height:22px;font-size:18px}
 span{flex:none;width:24px;border-left:1px solid #999;background:linear-gradient(#f4f4f4,#c8c8c8);display:flex;align-items:center;justify-content:center}
 :host([off]){background:#eaeaea}:host([lat]) select{font-size:17px}`,
 h => `<select aria-label="${h.getAttribute('label')}"><option>${h.getAttribute('value') || ''}</option></select><span><svg width="11" height="7"><path d="M0 0h11l-5.500 7z" fill="${h.hasAttribute('off') ? '#888' : '#000'}"/></svg></span>`);

define('win-ctrl', ':host{display:flex;gap:11px;align-items:center;flex:none}button{display:flex;min-width:16px;height:20px;align-items:center;justify-content:center}',
 h => h.getAttribute('set').split(' ').map(k => `<button type="button" aria-label="${k}"><svg width="18" height="18" viewBox="0 0 18 18">${{
  min:'<path d="M1 13h15v4H1z" fill="#fff"/>', rest:'<path d="M5 1h12v12h-3V4H5z" fill="#fff"/><path d="M1 6h11v11H1z" fill="#fff"/>',
  max:'<path d="M1 1h16v3H1zM1 6h16v11H1z" fill="#fff"/>', x:'<path d="M2 2l14 14M16 2L2 16" stroke="#fff" stroke-width="3"/>',
  cols:'<path d="M1 1h16v16H1zM5 1v16M9 1v16M13 1v16" fill="none" stroke="#f4f4f4" stroke-width="1.400"/>',
  colr:'<path d="M1 1h16v16H1zM9 1v16M11.500 1v16M14 1v16" fill="none" stroke="#f4f4f4" stroke-width="1.400"/>',
  rows:'<path d="M1 1h16v16H1zM1 5h16M1 9h16M1 13h16" fill="none" stroke="#f4f4f4" stroke-width="1.400"/>',
  left:'<path d="M13 1v16L4 9z" fill="#fff"/>', right:'<path d="M5 1v16l9-8z" fill="#fff"/>', down:'<path d="M1 5h16l-8 9z" fill="#fff"/>'}[k]}</svg></button>`).join(''));

define('tab-btn', `:host{display:block;flex:none}button{width:100%;height:31px;padding:0 33px 0 18px;border:1px solid #777;border-bottom:0;font-size:22px;line-height:26px;color:#555;display:flex;align-items:center;gap:9px;${HEADGRAD};white-space:nowrap}
 :host([icon]) button{padding:0 0 0 3px}span{padding-bottom:3px}
 :host([on]) button{height:33px;margin-bottom:-2px;position:relative;background:linear-gradient(#fff,#e9e9e9);color:#000;font-weight:600}`,
 h => `<button type="button">${h.getAttribute('icon') ? `<ui-icon name="${h.getAttribute('icon')}"></ui-icon>` : ''}<span><slot></slot></span></button>`);

/* ---------- top ---------- */
define('title-bar', `:host{flex:none;height:34px;border-top:7px solid #6d6d6d;border-bottom:1px solid #000;background:#1d1d1d;color:#fff}
 .row{height:20px;padding:0 4px 0 9px;gap:8px}h1{margin:0;font-size:20px;line-height:20px;font-weight:600;white-space:pre}.lg{width:25px;font-size:12px;line-height:12px;font-weight:700;color:#ddd}.lg b{color:#9aa8e8}`,
 `<div class="row"><div class="lg">TIA<br><b>V19</b></div><h1 class="grow">Siemens  -  D:\\gugeDownload\\CNG_换屏\\CNG\\CNG</h1><win-ctrl set="min rest x" style="gap:7px"></win-ctrl></div>`);

define('main-menu', `:host{flex:none;height:76px;background:#ccc;border-bottom:2px solid #1a2134;display:flex}
 .l{flex:1}nav{display:flex;height:36px;align-items:center;padding:2px 0 0 19px;gap:26px}nav a{color:#333;white-space:nowrap;line-height:24px}nav u{text-underline-offset:3px}
 .tools{display:flex;align-items:center;height:36px;padding-left:13px}.lab{font-size:20px;line-height:26px;padding:0 11px 3px 2px;color:#222}.off{color:#888}
 input{width:180px;height:27px;background:#fff;border:1px solid #777;padding:0 4px;margin-left:6px;font-size:18px}input::placeholder{color:#888;opacity:1}
 .brand{flex:none;width:420px;padding-top:21px;text-align:right}.brand b{display:block;font-size:20px;line-height:20px;font-weight:600;padding-right:72px}.brand strong{display:block;font-size:26px;line-height:24px;font-weight:600;color:#666;padding-right:37px}`,
 () => {
  const m = ['项目P','编辑E','视图V','插入I','在线O','选项N','工具T','窗口W','帮助H'].map(s => `<a href="#">${s.slice(0,2)}(<u>${s[2]}</u>)</a>`).join('');
  return `<div class="l"><nav>${m}</nav><div class="tools">${buttons('new open:34 save:33')}<span class="lab">保存项目</span>${buttons('| print | cut copy paste del | undo:30 dd:22 redo:30 dd:22 | compile dload uload pc rt | online:34')}<span class="lab" style="padding-left:4px">转至在线</span><tool-btn name="offline" w="28"></tool-btn><span class="lab off" style="padding-left:7px">转至离线</span>${buttons('| nethelp dev1 dev2 | xref | splith splitv | lock1 lock2 |')}<input aria-label="search" placeholder="&lt;在项目中搜索&gt;">${buttons('find:50')}</div></div>
  <div class="brand"><b>Totally Integrated Automation</b><strong>PORTAL</strong></div>`;
 });

/* ---------- project tree ---------- */
define('tree-row', `:host{display:flex;height:28px;border-bottom:1px solid #fff;background:#f0f0f0;line-height:22px;white-space:nowrap}
 .m{flex:1;display:flex;align-items:center;border-right:1px solid #c4c4c4}.tw{width:22px;display:flex;flex:none}ui-icon{width:22px;height:22px;margin-right:7px}.e{width:27px;flex:none}
 .t{padding-bottom:3px}:host([root]){background:#e1e1e1}:host([sel]) .m{background:#b3c0dd;outline:1px dashed #2a5fd0;outline-offset:-1px;font-weight:700}:host([sel]) .e{background:#bfcbe8}
 .lat{font-size:16px}:host([sel]) .lat{font-size:17px}`,
 h => { const l = +h.getAttribute('level'), t = h.textContent;
  return `<div class="m" style="padding-left:${l * 27 + 7}px"><span class="tw">${h.hasAttribute('open') ? '<svg width="12" height="7"><path d="M0 0h12l-6 7z"/></svg>' : ''}</span><ui-icon name="${h.getAttribute('icon')}"></ui-icon><span class="t ${/^[ -~]+$/.test(t) ? 'lat' : ''}"><slot></slot></span></div><div class="e"></div>`; });

const TREE = [['0','doc','CNG','root open'],[1,'add','添加新设备'],[1,'net','设备和网络'],[1,'hmi','HMI_1 [TP700 Comfort]','sel open'],[2,'cfg','设备组态'],[2,'diag','在线和诊断'],[2,'wr','运行系统设置'],[2,'scrs','画面','open'],[3,'add','添加新画面'],[3,'scra','A主画面']]
 .concat('B自动选择 C手动选择 D数据监控1 D数据监控2 D数据监控3 D数据监控4 E参数设置 F开机条件设置 G动作连锁设置1 G动作连锁设置2 H报警设置1 H报警设置2 i报警停机设置1 i报警停机设置2 J量程设置1 J量程设置2 k量程返回工厂值 L时间设置 M返回工厂值 N报警查询 O手动控制1 O手动控制2 O手动控制3 P运行时间 Q密码设置提示 R密码设置'.split(' ').map(t => [3,'scr',t]));

define('project-tree', `:host{display:flex;flex-direction:column;background:#e9e9e9;min-height:0}
 header{height:36px;flex:none;background:#2b3450;color:#fff;display:flex;align-items:center;padding:0 8px}h2{margin:0;flex:1;font-size:23px;line-height:30px;padding-bottom:3px;font-weight:500}
 .tabs{flex:none;height:40px;border-top:3px solid #ececec;border-bottom:1px solid #777;background:#cbcbcb;display:flex;align-items:flex-end;padding-left:9px;gap:2px}
 .tb{flex:none;height:42px;padding:0 9px;display:flex;align-items:center}.gap{flex:none;height:32px;background:#c2c2c2}
 .body{flex:1;min-height:0;display:flex;background:#c2c2c2;overflow:hidden}.rows{flex:1}
 .det{flex:none;border-top:4px solid #1a2134}.band{height:36px;background:#cbcbcb;border-bottom:1px solid #777}.blank{height:42px}
 .h{height:29px;border-top:1px solid #aaa;border-bottom:1px solid #aaa;${HEADGRAD};display:flex;font-size:20px;line-height:24px}.h span{border-right:1px solid #b4b4b4;padding-left:5px}
 .dl{display:flex;height:86px;overflow:hidden}.dr{display:flex;height:28px;border-bottom:1px solid #fff;background:#f0f0f0;line-height:25px}.dr span:nth-child(2){width:238px;padding-left:6px}
 .dr .i{width:28px;display:flex;align-items:center;justify-content:center}.dr.s span:nth-child(2){background:#d0d5da}.dr.s .i{border:1px dashed #777;background:#d0d5da}`,
 () => `<header><h2>项目树</h2><win-ctrl set="colr left"></win-ctrl></header>
 <div class="tabs"><tab-btn on>设备</tab-btn><tab-btn>工厂对象</tab-btn></div>
 <div class="tb"><tool-btn name="newtree" w="28"></tool-btn><span class="grow"></span><tool-sep></tool-sep><tool-btn boxed name="table" w="32" style="margin-right:4px"></tool-btn><tool-btn name="ovw" w="32"></tool-btn></div>
 <div class="gap"></div>
 <div class="body"><div class="rows">${TREE.map(([l,i,t,a]) => `<tree-row level="${l}" icon="${i}" ${a || ''}>${t}</tree-row>`).join('')}</div><scroll-bar before="2" thumb="364"></scroll-bar></div>
 <div class="det"><section-bar>详细视图</section-bar><div class="band"></div><div class="blank"></div>
 <div class="h"><span style="width:28px"></span><span style="width:239px">名称</span><span style="width:85px"></span></div>
 <div class="dl"><div class="grow">${[['cfg','设备组态'],['diag','在线和诊断'],['wr','运行系统设置']].map(([i,t],k) => `<div class="dr ${k ? '' : 's'}"><span class="i"><ui-icon name="${i}"></ui-icon></span><span>${t}</span></div>`).join('')}</div><scroll-bar before="2" thumb="11"></scroll-bar></div></div>`);

/* ---------- HMI screen ---------- */
define('hmi-button', `:host{position:absolute}button{width:100%;height:100%;border:4px solid #484a5a;border-radius:5px;padding-bottom:2px;background:linear-gradient(#82808e,#636570 28%,#636570 70%,#5b5d69);color:#fff;font-size:25px;font-weight:500;box-shadow:0 0 0 1px #8a8a96}`,
 '<button type="button"><slot></slot></button>');
define('alarm-view', `:host{position:absolute;left:0;right:0;top:65px;height:394px;background:#f0f0f0;border-bottom:2px solid #85858f;border-top:3px solid #f0f0f0}
 .top{display:flex;height:312px;background:#e6e6e9}.tbl{flex:1;display:flex;flex-direction:column;border:1px solid #a0a0aa;border-top:0;background:#fff}
 table{border-spacing:0;table-layout:fixed;width:100%;border-radius:3px}th{height:29px;padding:0 0 0 5px;font-size:24px;line-height:26px;font-weight:500;color:#fff;text-align:left;vertical-align:top;background:linear-gradient(#6c6a7a,#878592 15%,#5c5e6a);border-left:2px solid #83818d;white-space:nowrap}
 th:first-child{border-left:0}.st{flex:1;background:repeating-linear-gradient(#fff 0 25px,#e4e4e6 25px 50px,#fff 50px 51px)}
 .sc{width:52px;display:flex;flex-direction:column;align-items:center;padding:20px 0 18px}.sc i{width:10px;height:158px;background:#191f33;margin:18px 0 71px}
 .bt{display:flex;justify-content:space-between;padding:13px 5px 0 4px}.bt div{display:flex;gap:8px}.bt button{width:84px;height:60px;border:1px solid #a6a6b4;border-radius:5px;background:linear-gradient(#fbfbfb,#e0e0e0);display:flex;align-items:center;justify-content:center}.bt ui-icon{width:42px;height:38px}`,
 `<div class="top"><div class="tbl"><table><colgroup><col style="width:40px"><col style="width:114px"><col style="width:115px"><col style="width:138px"><col style="width:66px"><col><col style="width:90px"></colgroup><tr><th></th><th>编号</th><th>时间</th><th>日期</th><th>状态</th><th>文本</th><th>确认组</th></tr></table><div class="st"></div></div>
 <div class="sc"><svg width="26" height="13"><path d="M0 13h26L13 0z" fill="#191f33"/></svg><i></i><svg width="26" height="13"><path d="M0 0h26L13 13z" fill="#191f33"/></svg></div></div>
 <div class="bt"><button type="button" aria-label="help"><ui-icon name="hflt"></ui-icon></button><div><button type="button" aria-label="loop"><ui-icon name="hloop"></ui-icon></button><button type="button" aria-label="ack"><ui-icon name="hack"></ui-icon></button></div></div>`);
define('hmi-screen', `:host{position:absolute;left:206px;top:101px;width:1200px;height:720px;border:3px solid #ddd;background:#b4b4b4}
 svg.d{position:absolute;inset:0;width:100%;height:100%}
 h2{position:absolute;margin:0;left:0;right:0;top:-7px;text-align:center;font-size:48px;line-height:60px;font-weight:400;color:#31334e}
 h3{position:absolute;margin:0;left:861px;top:487px;font-size:33px;line-height:48px;font-weight:400;color:#31334e;white-space:nowrap}
 output{position:absolute;left:807px;top:544px;width:300px;height:60px;border:6px solid #636570;outline:1px solid #8a8a96;box-shadow:inset 0 0 0 1px #444;background:#fff;text-align:center;font-size:25px;line-height:46px;color:#31334e}`,
 `<svg class="d"><defs><pattern id="p" width="12" height="12" patternUnits="userSpaceOnUse"><path d="M9 9h1v1H9z" fill="#000"/></pattern></defs><rect width="100%" height="100%" fill="url(#p)"/></svg>
 <h2>主菜单</h2><alarm-view></alarm-view>
 <hmi-button style="left:37px;top:493px;width:300px;height:90px">数据监控</hmi-button><hmi-button style="left:393px;top:493px;width:300px;height:90px">参数设置</hmi-button>
 <hmi-button style="left:36px;top:604px;width:300px;height:90px">报警查询</hmi-button><hmi-button style="left:393px;top:604px;width:300px;height:90px">手动控制</hmi-button>
 <h3>系统运行状态</h3><output>自动运行</output>
 <hmi-button style="left:757px;top:618px;width:181px;height:75px">自动</hmi-button><hmi-button style="left:976px;top:618px;width:181px;height:75px">手动</hmi-button>`);

define('screen-editor', `:host{display:flex;flex-direction:column;min-height:0;background:#e9e9e9}
 header{height:36px;flex:none;background:#b1b1b1;color:#fff;display:flex;align-items:center;padding:0 6px 0 8px;font-size:20px;font-weight:600;white-space:nowrap}header span{line-height:26px;padding-bottom:2px}header svg{margin:0 12px}
 .band{flex:none;height:40px;border-top:3px solid #ececec;border-bottom:1px solid #777;background:#cbcbcb}
 .fmt{flex:none;height:42px;display:flex;align-items:center;padding-left:9px}.fn{width:144px;height:27px;border:1px solid #888;background:#eaeaea}
 .cv{flex:1;min-height:0;display:flex;padding-left:4px;background:#d0d0d0}.free{flex:1;position:relative;overflow:hidden;background:linear-gradient(90deg,#777 78px,#6f879b 78px 108px,#000 108px 1496px,#6f879b 1496px 1527px,#777 1527px 1604px,#dadada 1604px)}
 .touch{position:absolute;left:1406px;top:100px;width:92px;height:309px;background:#6f879b;writing-mode:vertical-rl;font-family:"DejaVu Sans Condensed","Liberation Sans",sans-serif;font-size:88px;line-height:92px;color:#000;text-align:center}
 .wm{position:absolute;left:620px;top:500px;transform:rotate(-32deg);width:480px;text-align:center;color:rgba(255,255,255,.45);font-weight:600;white-space:nowrap;font-family:"Liberation Sans","Noto Sans CJK SC",sans-serif;text-shadow:0 0 2px rgba(120,120,120,.3);font-size:40px;line-height:40px}.wm span{display:block;font-size:25px;line-height:26px}
 .zm{flex:none;height:28px;display:flex;align-items:center;background:#e9e9e9}.hs{flex:1;height:100%;background:#dcdcdc}.zm input{width:108px;height:24px;margin:0 17px 0 22px;background:linear-gradient(#555,#555) 0 9px/100% 1px no-repeat,repeating-linear-gradient(90deg,#222 0 1px,transparent 1px 8px) 4px 100%/104px 4px no-repeat}
 .zm input::-webkit-slider-thumb{appearance:none;width:15px;height:20px;background:#b4b4b4;clip-path:polygon(0 0,100% 0,100% 70%,50% 100%,0 70%)}
 .fit{background:#fff;width:26px;height:28px;padding:2px 3px}`,
 () => { const ar = '<svg width="5" height="10"><path d="M0 0l5 5-5 5z" fill="#fff"/></svg>';
  return `<header><span>CNG</span>${ar}<span>HMI_1 [TP700 Comfort]</span>${ar}<span>画面</span>${ar}<span>A主画面</span><span class="grow"></span><win-ctrl set="min rest max x" style="gap:9px"></win-ctrl></header><div class="band"></div>
  <div class="fmt"><input class="fn" aria-label="font"><tool-btn name="list" w="26"></tool-btn><combo-box off label="size" style="width:57px;margin:0 8px 0 10px"></combo-box>${buttons('fB fI fU fS fA:34 dd:22 al:30 dd:22 | fc:30 dd:22 fill:30 ddk:22 pen:30 dd:22 | lw:30 dd:22 ls:30 dd:22 | lay:30 dd:22 rot:30 dd:22 alr:30 dd:22 dist:30 dd:22 wid:30 dd:22 | broom:34 tab:30 dd:22 zoomsel:36')}</div>
  <div class="cv"><div class="free"><div class="touch">TOUCH</div><hmi-screen></hmi-screen><div class="wm">西门子工业 技术论坛<span>support.industry.siemens.com/cs</span></div></div><scroll-bar before="81" thumb="562"></scroll-bar></div>
  <div class="zm"><div class="hs"></div><combo-box lat label="zoom" value="100%" style="width:234px;margin-left:9px"></combo-box><input type="range" aria-label="zoom level"><span class="fit"><ui-icon name="fit" style="width:15px;height:13px"></ui-icon></span></div>`; });

/* ---------- messages ---------- */
const MSG = [['err',2,'HMI_1','16:58:20'],['err',3,'因为存在传送错误 A60210002B61FF91，下载被取消！','17:01:43'],['err',3,'调整目标设备失败。','17:02:17'],['err',3,'下载到模块 HMI_RT_1 时出错。','17:02:18'],['info',1,'扫描接口 CP5711 [PROFIBUS] 上的设备已完成。在网络上未找到任何设备。','16:57:00'],['info',1,'扫描接口 CP5711 [PROFIBUS] 上的设备已完成。在网络上找到了 1 个设备。','16:58:04'],['err',1,'装载中止（错误：3；警告：0）。','17:02:20']];
define('message-pane', `:host{display:flex;flex-direction:column;flex:none;height:400px;border-top:4px solid #1a2134;background:#f0f0f0}
 .top{height:35px;flex:none;background:#b1b1b1;display:flex;justify-content:flex-end;align-items:flex-end;padding-right:5px;gap:2px}
 .top tab-btn{width:115px}.band{flex:none;height:40px;border-top:4px solid #ececec;border-bottom:1px solid #777;background:#cbcbcb;display:flex;align-items:flex-end;gap:3px;padding-left:9px}
 .tb{flex:none;height:42px;display:flex;align-items:center;padding-left:6px;background:#e9e9e9}.tb tool-btn{margin-right:4px}
 .w{margin-top:30px;flex:1;display:flex;min-height:0}.tw{flex:1;min-width:0}table{border-spacing:0;table-layout:fixed;width:100%}th{height:29px;padding:0 0 2px 5px;border:1px solid #aaa;border-left:0;font-size:20px;line-height:24px;font-weight:400;text-align:left;${HEADGRAD}}
 td{height:28px;padding:0 0 1px 7px;border-bottom:1px solid #fff;line-height:26px;white-space:nowrap}td:first-child{padding:0 0 0 10px}td ui-icon{display:flex}tr.s td:nth-child(-n+6){background:#d2d7db}tr.s td:first-child{outline:1px dashed #777;outline-offset:-1px}.lat{font-size:17px}
 .r{display:flex;flex-direction:column}.r div{width:27px;height:29px;${HEADGRAD};border:1px solid #aaa}.r scroll-bar{flex:1}`,
 () => `<div class="top"><tab-btn icon="prop">属性</tab-btn><tab-btn on icon="msg">信息</tab-btn><tab-btn icon="diag">诊断</tab-btn><win-ctrl set="rest rows down" style="margin:0 0 8px 28px"></win-ctrl></div>
 <div class="band"><tab-btn on>常规</tab-btn><tab-btn>交叉引用</tab-btn><tab-btn>编译</tab-btn></div>
 <div class="tb"><tool-btn boxed name="err" w="32"></tool-btn><tool-btn boxed name="warn" w="32"></tool-btn><tool-btn boxed name="info" w="32"></tool-btn><combo-box label="filter" value="显示所有消息" style="width:300px;margin-left:3px"></combo-box></div>
 <div class="w"><div class="tw"><table><colgroup><col style="width:44px"><col style="width:788px"><col style="width:76px"><col style="width:75px"><col style="width:108px"><col style="width:233px"><col></colgroup>
 <thead><tr><th style="padding-left:9px;font-size:16px">!</th><th>消息</th><th>转至</th><th style="font-size:16px">?</th><th>日期</th><th>时间</th><th></th></tr></thead><tbody>
 ${MSG.map(([i,l,t,h],k) => `<tr class="${k === 6 ? 's' : ''}"><td><ui-icon name="${i}"></ui-icon></td><td class="${l === 2 ? 'lat' : ''}" style="padding-left:${l === 3 ? 88 : 34}px">${l === 2 ? '<svg width="12" height="7" style="margin:0 16px 4px 0"><path d="M0 0h12l-6 7z"/></svg>' : ''}${t}</td><td></td><td></td><td class="lat">2024/7/9</td><td class="lat">${h}</td><td></td></tr>`).join('')}</tbody></table></div>
 <div class="r"><div></div><scroll-bar before="106" thumb="30"></scroll-bar></div></div>`);

/* ---------- toolbox ---------- */
define('tool-box', `:host{display:flex;flex-direction:column;min-height:0;background:#f0f0f0}
 header{height:36px;flex:none;background:#b1b1b1;color:#fff;display:flex;align-items:center;padding:0 9px 0 8px}h2{margin:0;flex:1;font-size:23px;line-height:30px;padding-bottom:3px;font-weight:500}
 h3{margin:0;flex:none;height:41px;padding:6px 0 0 8px;font-size:23px;line-height:27px;font-weight:500;border-top:3px solid #ececec;border-bottom:2px solid #707070;background:linear-gradient(#e6e6e6 7px,#f6f6f6 7px,#e0e0e0 22px,#d4d4d4 22px,#dedede)}
 .tb{flex:none;height:41px;background:#e9e9e9;display:flex;align-items:center;padding:0 2px 0 5px}
 section-bar{border-top:3px solid #999}.g{display:grid;grid-template-columns:repeat(7,63px);grid-auto-rows:54px;overflow:hidden;flex:1;align-content:start;margin-left:-2px}.g.six{grid-template-columns:repeat(6,63px)}
 .g button{display:flex;align-items:center;justify-content:center}.g ui-icon{width:42px;height:40px}
 .a{height:90px;flex:none}.a .g{padding-top:3px}.b{height:150px;flex:none;padding-top:2px}.c{flex:1;padding-top:3px}.a,.b,.c{display:flex;overflow:hidden}`,
 () => { const g = (s, c = '') => `<div class="g ${c}">` + s.split(' ').map(n => `<button type="button" aria-label="${n}"><ui-icon name="${n}"></ui-icon></button>`).join('') + '</div>';
  return `<header><h2>工具箱</h2><win-ctrl set="rest cols right" style="gap:8px"></win-ctrl></header><h3>选项</h3>
  <div class="tb"><tool-btn name="arrow" w="38"></tool-btn><tool-btn name="stamp" w="34"></tool-btn><tool-btn name="opts" w="38"></tool-btn><tool-btn name="grid" w="34"></tool-btn><combo-box label="style" value="深色默认值" style="width:180px;margin-left:4px"></combo-box><span class="grow"></span><tool-btn name="win" w="32"></tool-btn></div>
  <section-bar>基本对象</section-bar><div class="a">${g('line poly pgon ell circ rect txt img', 'six')}<scroll-bar before="3" thumb="26"></scroll-bar></div>
  <section-bar>元素</section-bar><div class="b">${g('io btn sym gio date bar sw book slide gauge clock')}</div>
  <section-bar>控件</section-bar><div class="c">${g('alarm trend user web recv dish recipe fx sdiag media plc step smart plclist cam pdf')}</div>
  <section-bar closed>图形</section-bar>`; });

define('side-tab', `:host{flex:none}button{width:31px;height:100%;border:1px solid #777;border-left:0;box-shadow:inset -1px 0 #fff;background:linear-gradient(90deg,#eee,#d2d2d2);display:flex;flex-direction:column;align-items:center;padding-top:4px;gap:9px;color:#555}
 span{writing-mode:vertical-rl;text-orientation:sideways;font-size:22px;line-height:26px}:host([on]) button{background:linear-gradient(90deg,#e4e4e4,#fff);color:#000;font-weight:500}:host([lat]) span{font-size:19px;font-weight:600}ui-icon{margin-left:-2px}`,
 h => `<button type="button"><ui-icon name="${h.getAttribute('icon')}"></ui-icon><span><slot></slot></span></button>`);

define('status-bar', `:host{flex:none;background:#1d1d1d;color:#fff}.m{display:flex;height:42px;align-items:center;font-size:20px;padding-bottom:1px}
 .pv{display:flex;align-items:center;gap:17px;padding-left:51px;width:268px;font-weight:600;font-size:21px}.tk{width:170px;height:28px;background:#c3c3c3;color:#333;display:flex;align-items:center;gap:6px;padding:0 4px;margin:0 4px 2px 0}.tk.on{background:#fff;color:#000;font-weight:500}.tk ui-icon{width:24px;height:22px;margin-top:4px}
 .tk b{font-weight:inherit;padding-bottom:4px;line-height:24px}
 .msg{width:498px;border-left:1px solid #444;height:42px;display:flex;align-items:center;gap:7px;padding-left:4px}
 .os{height:11px;background:#20262c;overflow:hidden;display:flex;justify-content:space-between}.os i{width:73px;margin-left:227px;background:#494e52}.os span{font-size:16px;line-height:24px;margin-right:118px;margin-top:2px}`,
 `<div class="m"><a class="pv" href="#"><svg width="9" height="18"><path d="M9 0v18L0 9z" fill="#fff"/></svg>Portal 视图</a><button type="button" class="tk"><ui-icon name="over"></ui-icon><b>总览</b></button><button type="button" class="tk on"><ui-icon name="scr"></ui-icon><b>A主画面</b></button><span class="grow"></span><ui-icon name="navi" style="width:30px;height:30px;margin-right:10px"></ui-icon><div class="msg"><ui-icon name="err"></ui-icon>装载中止（错误：3；警告：0）。</div></div><div class="os"><i></i><span>9:15</span></div>`);

/* ---------- shell ---------- */
define('tia-portal', `:host{display:flex;flex-direction:column;height:100vh;min-width:1400px}
 main{flex:1;min-height:0;display:grid;grid-template-columns:36px 378px minmax(0,1fr) 428px 38px;background:#1a2134}
 .ls{background:#b1b1b1;border-right:2px solid #1a2134;color:#fff}.ls div{height:37px;border-bottom:1px solid #fff}.ls div+div{height:331px;padding:130px 0 0 2px}
 .ls span{display:block;writing-mode:vertical-rl;text-orientation:sideways;transform:rotate(180deg);font-size:23px;line-height:28px}
 .ce{display:flex;flex-direction:column;min-height:0;padding:0 3px;min-width:0}screen-editor{flex:1}
 .rs{background:#b1b1b1;border-left:2px solid #1a2134;padding-top:45px;display:flex;flex-direction:column;gap:4px}`,
 `<title-bar></title-bar><main-menu></main-menu><main><div class="ls"><div></div><div><span>可视化</span></div></div><project-tree></project-tree><div class="ce"><screen-editor></screen-editor><message-pane></message-pane></div><tool-box></tool-box>
 <div class="rs"><side-tab on icon="ta" style="height:136px">工具箱</side-tab><side-tab icon="anim" style="height:113px">动画</side-tab><side-tab icon="layo" style="height:113px">布局</side-tab><side-tab icon="instr" style="height:113px">指令</side-tab><side-tab icon="task" style="height:113px">任务</side-tab><side-tab icon="lib" style="height:88px">库</side-tab><side-tab lat icon="addin" style="height:142px">Add-Ins</side-tab></div></main><status-bar></status-bar>`);
</script>
</body>
</html>
